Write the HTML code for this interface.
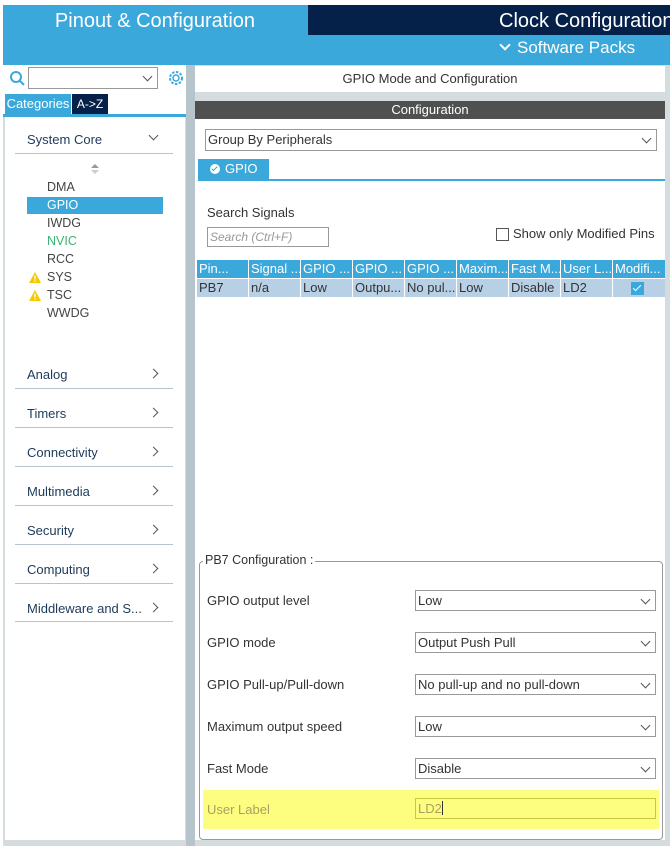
<!DOCTYPE html><html><head><style>
*{box-sizing:border-box;margin:0;padding:0}
body{width:670px;height:846px;position:relative;background:#fff;font-family:"Liberation Sans",sans-serif;font-size:13px;color:#333;overflow:hidden}
.a{position:absolute}
.sel{position:absolute;border:1px solid #999;background:#fff;font-size:13px;padding-left:2px;line-height:20px;color:#333}
.sel:after{content:"";position:absolute;right:6px;top:5px;width:6px;height:6px;border-right:1px solid #555;border-bottom:1px solid #555;transform:rotate(45deg)}
.cat{position:absolute;left:27px;font-size:13px;color:#1d3a5a}
.cl{position:absolute;left:15px;width:158px;height:1px;background:#b8c4cc}
.chev{position:absolute;left:150px;width:7px;height:7px;border-right:1px solid #555;border-top:1px solid #555;transform:rotate(45deg)}
.it{position:absolute;left:47px;font-size:12.5px;color:#444}
.th{position:absolute;top:260px;height:18px;background:#3ba8dc;color:#fff;font-size:13px;line-height:18px;padding-left:2px;white-space:nowrap;overflow:hidden}
.td{position:absolute;top:279px;height:18px;background:#b8d0e6;color:#333;font-size:13px;line-height:18px;padding-left:2px;white-space:nowrap;overflow:hidden}
.lb{position:absolute;left:207px;font-size:13px;color:#333}
</style></head><body>
<div class="a" style="left:3px;top:5px;width:667px;height:60px;background:#3ba8dc"></div>
<div class="a" style="left:3px;top:5px;width:304px;height:30px;color:#fff;font-size:20px;text-align:center;line-height:32px">Pinout &amp; Configuration</div>
<div class="a" style="left:308px;top:5px;width:362px;height:30px;background:#05214a;color:#fff;font-size:20px;line-height:32px;padding-left:191px;white-space:nowrap;overflow:hidden">Clock Configuration</div>
<div class="a" style="left:498px;top:38px;color:#fff;font-size:17px;white-space:nowrap"><span style="display:inline-block;width:8px;height:8px;border-right:2px solid #fff;border-bottom:2px solid #fff;transform:rotate(45deg);margin:0 8px 4px 3px"></span>Software Packs</div>
<div class="a" style="left:3px;top:65px;width:667px;height:781px;background:#d4dce0"></div>
<div class="a" style="left:3px;top:65px;width:187px;height:50px;background:#fff"></div>
<svg class="a" style="left:9px;top:70px" width="18" height="18"><circle cx="7" cy="7" r="5" fill="none" stroke="#3ba8dc" stroke-width="2"/><line x1="11" y1="11" x2="15" y2="15" stroke="#3ba8dc" stroke-width="2"/></svg>
<div class="sel" style="left:28px;top:67px;width:130px;height:22px"></div>
<svg class="a" style="left:167px;top:69px" width="18" height="18"><circle cx="9" cy="9" r="6" fill="none" stroke="#3ba8dc" stroke-width="2" stroke-dasharray="2.5 1.5"/><circle cx="9" cy="9" r="3" fill="none" stroke="#3ba8dc" stroke-width="1.5"/></svg>
<div class="a" style="left:5px;top:94px;width:66px;height:20px;background:#3ba8dc;color:#fff;line-height:20px;text-align:center">Categories</div>
<div class="a" style="left:72px;top:94px;width:36px;height:20px;background:#05214a;color:#fff;line-height:20px;text-align:center;font-size:12px">A-&gt;Z</div>
<div class="a" style="left:3px;top:114px;width:183px;height:3px;background:#3ba8dc"></div>
<div class="a" style="left:5px;top:117px;width:180px;height:723px;background:#fff"></div>
<div class="a" style="left:186px;top:65px;width:9px;height:781px;background:#b8c4cc"></div>
<div class="cat" style="top:132px">System Core</div><div class="chev" style="top:132px;transform:rotate(135deg)"></div><div class="cl" style="top:153px"></div>
<div class="a" style="left:91px;top:164px;width:0;height:0;border:4px solid transparent;border-bottom-color:#999;border-top:0"></div>
<div class="a" style="left:91px;top:170px;width:0;height:0;border:4px solid transparent;border-top-color:#ccc;border-bottom:0"></div>
<div class="it" style="top:180px">DMA</div>
<div class="a" style="left:27px;top:197px;width:136px;height:17px;background:#3ba8dc"></div>
<div class="it" style="top:198px;color:#fff">GPIO</div>
<div class="it" style="top:216px">IWDG</div>
<div class="it" style="top:234px;color:#3cb371">NVIC</div>
<div class="it" style="top:252px">RCC</div>
<div class="it" style="top:270px">SYS</div>
<div class="it" style="top:288px">TSC</div>
<div class="it" style="top:306px">WWDG</div>
<svg class="a" style="left:28px;top:271px" width="14" height="13"><path d="M7 1L13 12H1Z" fill="#f6c800"/><rect x="6.3" y="4.5" width="1.4" height="4" fill="#fff"/><rect x="6.3" y="9.5" width="1.4" height="1.3" fill="#fff"/></svg>
<svg class="a" style="left:28px;top:289px" width="14" height="13"><path d="M7 1L13 12H1Z" fill="#f6c800"/><rect x="6.3" y="4.5" width="1.4" height="4" fill="#fff"/><rect x="6.3" y="9.5" width="1.4" height="1.3" fill="#fff"/></svg>
<div class="cat" style="top:367px">Analog</div><div class="chev" style="top:370px"></div><div class="cl" style="top:388px"></div>
<div class="cat" style="top:406px">Timers</div><div class="chev" style="top:409px"></div><div class="cl" style="top:427px"></div>
<div class="cat" style="top:445px">Connectivity</div><div class="chev" style="top:448px"></div><div class="cl" style="top:466px"></div>
<div class="cat" style="top:484px">Multimedia</div><div class="chev" style="top:487px"></div><div class="cl" style="top:505px"></div>
<div class="cat" style="top:523px">Security</div><div class="chev" style="top:526px"></div><div class="cl" style="top:544px"></div>
<div class="cat" style="top:562px">Computing</div><div class="chev" style="top:565px"></div><div class="cl" style="top:583px"></div>
<div class="cat" style="top:601px">Middleware and S...</div><div class="chev" style="top:604px"></div><div class="cl" style="top:621px"></div>
<div class="a" style="left:195px;top:66px;width:470px;height:26px;background:#fff;text-align:center;line-height:26px;font-size:13px;color:#333">GPIO Mode and Configuration</div>
<div class="a" style="left:195px;top:101px;width:470px;height:18px;background:#505050;color:#fff;text-align:center;line-height:18px">Configuration</div>
<div class="a" style="left:195px;top:119px;width:470px;height:721px;background:#fff"></div>
<div class="sel" style="left:205px;top:129px;width:452px;height:22px">Group By Peripherals</div>
<div class="a" style="left:198px;top:159px;width:71px;height:20px;background:#3ba8dc;color:#fff;line-height:20px;padding-left:12px"><span style="display:inline-block;width:10px;height:10px;border-radius:50%;background:#fff;position:relative;top:1px;margin-right:5px;"><span style="position:absolute;left:3px;top:1px;width:3px;height:6px;border-right:1.5px solid #3cb371;border-bottom:1.5px solid #3cb371;transform:rotate(45deg)"></span></span>GPIO</div>
<div class="a" style="left:198px;top:179px;width:467px;height:2px;background:#3ba8dc"></div>
<div class="a" style="left:207px;top:205px">Search Signals</div>
<div class="a" style="left:207px;top:227px;width:122px;height:20px;border:1px solid #999;font-style:italic;color:#999;font-size:12px;line-height:18px;padding-left:2px">Search (Ctrl+F)</div>
<div class="a" style="left:496px;top:228px;width:13px;height:13px;border:1px solid #555"></div>
<div class="a" style="left:513px;top:226px">Show only Modified Pins</div>
<div class="th" style="left:197px;width:51px">Pin...</div>
<div class="th" style="left:249px;width:51px">Signal ...</div>
<div class="th" style="left:301px;width:51px">GPIO ...</div>
<div class="th" style="left:353px;width:51px">GPIO ...</div>
<div class="th" style="left:405px;width:51px">GPIO ...</div>
<div class="th" style="left:457px;width:51px">Maxim...</div>
<div class="th" style="left:509px;width:51px">Fast M...</div>
<div class="th" style="left:561px;width:51px">User L...</div>
<div class="th" style="left:613px;width:52px">Modifi...</div>
<div class="td" style="left:197px;width:51px">PB7</div>
<div class="td" style="left:249px;width:51px">n/a</div>
<div class="td" style="left:301px;width:51px">Low</div>
<div class="td" style="left:353px;width:51px">Outpu...</div>
<div class="td" style="left:405px;width:51px">No pul...</div>
<div class="td" style="left:457px;width:51px">Low</div>
<div class="td" style="left:509px;width:51px">Disable</div>
<div class="td" style="left:561px;width:51px">LD2</div>
<div class="td" style="left:613px;width:52px"></div>
<div class="a" style="left:631px;top:282px;width:13px;height:13px;background:#3ba8dc"></div>
<div class="a" style="left:635px;top:283px;width:4px;height:8px;border-right:1.5px solid #fff;border-bottom:1.5px solid #fff;transform:rotate(45deg)"></div>
<div class="a" style="left:199px;top:561px;width:464px;height:279px;border:1px solid #999;border-radius:4px"></div>
<div class="a" style="left:203px;top:553px;background:#fff;padding:0 2px;font-size:12.5px">PB7 Configuration :</div>
<div class="lb" style="top:593px">GPIO output level</div>
<div class="sel" style="left:415px;top:590px;width:241px;height:21px">Low</div>
<div class="lb" style="top:635px">GPIO mode</div>
<div class="sel" style="left:415px;top:632px;width:241px;height:21px">Output Push Pull</div>
<div class="lb" style="top:677px">GPIO Pull-up/Pull-down</div>
<div class="sel" style="left:415px;top:674px;width:241px;height:21px">No pull-up and no pull-down</div>
<div class="lb" style="top:719px">Maximum output speed</div>
<div class="sel" style="left:415px;top:716px;width:241px;height:21px">Low</div>
<div class="lb" style="top:761px">Fast Mode</div>
<div class="sel" style="left:415px;top:758px;width:241px;height:21px">Disable</div>
<div class="a" style="left:203px;top:790px;width:456px;height:39px;background:#fdfd80"></div>
<div class="lb" style="top:802px;color:#aaa060">User Label</div>
<div class="a" style="left:415px;top:798px;width:241px;height:21px;border:1px solid #c8c840;color:#aaa060;padding-left:2px;line-height:19px">LD2<span style="display:inline-block;width:1px;height:14px;background:#333;vertical-align:-2px"></span></div>
</body></html>
